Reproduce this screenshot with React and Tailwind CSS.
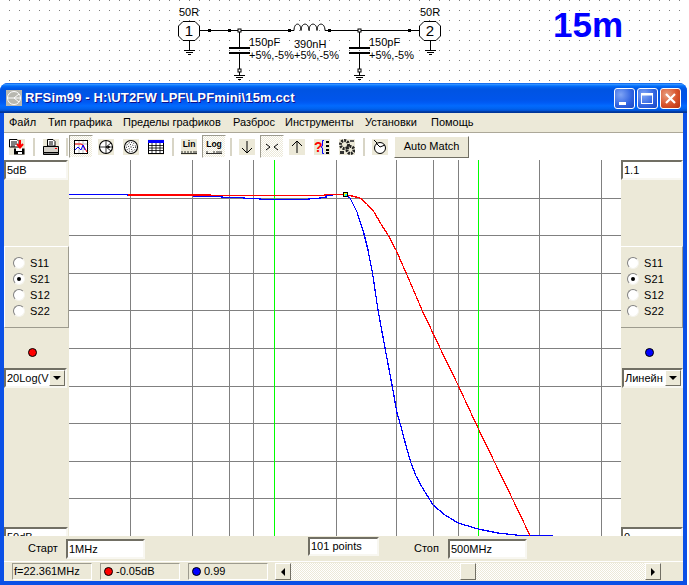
import React from "react";

const FONT = "font-['Liberation_Sans',Arial,sans-serif]";
const SUNK = "border-2 border-t-[#716f64] border-l-[#716f64] border-r-[#f8f7f1] border-b-[#f8f7f1] bg-white";
const THIN = "border border-t-[#9d9b8e] border-l-[#9d9b8e] border-r-white border-b-white";
const RAISED = "border border-t-white border-l-white border-r-[#716f64] border-b-[#716f64] bg-[#ece9d8]";
const CHECK = "bg-[repeating-conic-gradient(#ffffff_0_25%,#ece9d8_0_50%)] bg-[length:2px_2px]";

function Gnd({ x, y }) {
  return (
    <g stroke="#000" strokeWidth="1">
      <path d={`M${x - 5} ${y}H${x + 6}M${x - 3} ${y + 2}H${x + 4}M${x - 1} ${y + 4}H${x + 2}`} />
    </g>
  );
}

function Cap({ x }) {
  return (
    <g>
      <path d={`M${x + 0.5} 30V47M${x + 0.5} 54V70`} stroke="#000" />
      <path d={`M${x - 10} 48H${x + 11}M${x - 10} 53H${x + 11}`} stroke="#000" strokeWidth="2" />
      <rect x={x - 1} y="29" width="3" height="3" fill="#fff" stroke="#000" />
      <rect x={x - 1} y="69" width="3" height="3" fill="#fff" stroke="#000" />
      <path d={`M${x + 0.5} 72V75`} stroke="#000" />
      <Gnd x={x} y={75.5} />
    </g>
  );
}

function Port({ x, label, n }) {
  return (
    <g>
      <path
        d={`M${x - 6} 21.5H${x + 6}L${x + 10.5} 26V36L${x + 6} 40.5H${x - 6}L${x - 10.5} 36V26Z`}
        fill="#fff"
        stroke="#000"
      />
      <text x={x} y="36" fontSize="15" textAnchor="middle" fill="#000">{n}</text>
      <text x={x - 10} y="16" fontSize="11" fill="#000">{label}</text>
      <path d={`M${x + 0.5} 41V50`} stroke="#000" />
      <Gnd x={x} y={50.5} />
    </g>
  );
}

function Schematic() {
  return (
    <svg viewBox="0 0 500 83" className="w-[500px] h-[83px] shrink-0" fontFamily="'Liberation Sans',Arial,sans-serif">
      <path d="M199 30.5H294M325 30.5H420" stroke="#000" />
      {[209, 229, 289, 329, 409].map((x) => (
        <rect key={x} x={x - 1} y="29" width="3" height="3" fill="#000" />
      ))}
      <path
        d="M294 30.5C294 22 301 22 301 30.5C301 22 309 22 309 30.5C309 22 317 22 317 30.5C317 22 325 22 325 30.5"
        fill="none"
        stroke="#000"
      />
      <Cap x={239} />
      <Cap x={359} />
      <Port x={189} label="50R" n="1" />
      <Port x={430} label="50R" n="2" />
      <g fontSize="11" fill="#000">
        <text x="249" y="46">150pF</text>
        <text x="249" y="59">+5%,-5%</text>
        <text x="294" y="48">390nH</text>
        <text x="294" y="59">+5%,-5%</text>
        <text x="369" y="46">150pF</text>
        <text x="369" y="59">+5%,-5%</text>
      </g>
    </svg>
  );
}

const icons = {
  save: (
    <>
      <path d="M0.5 0.5H8L10 2.5V8H0.5Z" fill="#fff" stroke="#000" />
      <path d="M2 3H8M2 5H8M2 7H6" stroke="#000" />
      <path d="M5 9.5H15.5V15.5H5Z" fill="#000" />
      <rect x="7" y="9" width="6" height="3" fill="#fff" />
      <rect x="9" y="13" width="4" height="2" fill="#fff" />
      <path d="M11 1V7M8 5L11 8.5L14 5" fill="none" stroke="#f00" strokeWidth="2" />
    </>
  ),
  print: (
    <>
      <path d="M4.5 0.5H10L12 2.5V7H4.5Z" fill="#fff" stroke="#000" />
      <path d="M6 3H10M6 5H10" stroke="#000" />
      <path d="M0.5 7.5H15.5V13.5H0.5Z" fill="#d4d0c8" stroke="#000" />
      <path d="M0.5 13.5H15.5V15.5H0.5Z" fill="#808080" stroke="#000" />
      <rect x="12" y="9" width="2" height="1" fill="#f00" />
    </>
  ),
  chart: (
    <>
      <rect x="1.5" y="1.5" width="13" height="13" fill="#fff" stroke="#000" />
      <path d="M2 5H14M6 2V14M10 2V14" stroke="#bbb" />
      <path d="M2 5H8L10 6L14 13" fill="none" stroke="#f00" />
      <path d="M2 11L5 8L8 11L10 6L12 11" fill="none" stroke="#00f" />
    </>
  ),
  smith: (
    <>
      <circle cx="8" cy="8" r="6.5" fill="#fff" stroke="#000" strokeWidth="1.1" />
      <path d="M1 8H15M8 1.5V14.5M8 8L13 4M8 8L13 12" stroke="#000" strokeWidth="0.8" />
      <circle cx="10.5" cy="8" r="1.3" fill="#000" />
    </>
  ),
  polar: (
    <>
      <circle cx="8" cy="8" r="6.5" fill="#fff" stroke="#000" strokeWidth="1.1" />
      <circle cx="8" cy="8" r="4.5" fill="none" stroke="#000" strokeDasharray="1 1.6" />
      <circle cx="8" cy="8" r="2.5" fill="none" stroke="#000" strokeDasharray="1 1.6" />
      <rect x="7.5" y="7.5" width="1" height="1" fill="#000" />
    </>
  ),
  table: (
    <>
      <rect x="0.5" y="1.5" width="15" height="13" fill="#fff" stroke="#000" />
      <rect x="0" y="1" width="16" height="3" fill="#00f" />
      <path d="M1 6.5H15M1 9H15M1 11.5H15M4 4V14M8 4V14M12 4V14" stroke="#000" strokeWidth="0.8" />
    </>
  ),
  lin: (
    <>
      <text x="8" y="8" fontSize="8.5" fontWeight="bold" textAnchor="middle" fill="#000">Lin</text>
      <path d="M0 14.5H16M1 12V14M4 12V14M7 12V14M10 12V14M13 12V14M15 12V14" stroke="#000" strokeWidth="0.8" />
    </>
  ),
  log: (
    <>
      <text x="8" y="8" fontSize="8.5" fontWeight="bold" textAnchor="middle" fill="#000">Log</text>
      <path d="M0 14.5H16M1 12V14M8 12V14M11 12V14M13 12V14M15 12V14" stroke="#000" strokeWidth="0.8" />
    </>
  ),
  down: <path d="M8 2V14M3 9L8 14L13 9" fill="none" stroke="#000" />,
  center: <path d="M2 5L6 8L2 11M14 5L10 8L14 11" fill="none" stroke="#000" />,
  up: <path d="M8 14V2M3 7L8 2L13 7" fill="none" stroke="#000" />,
  help: (
    <>
      <text x="0" y="13" fontSize="14" fontWeight="bold" fill="#f00">?</text>
      <path d="M10 1.5H8.5V7L7 8L8.5 9V14.5H10" fill="none" stroke="#00f" />
      <path d="M12 2H15V4H12ZM12 6H15V8H12ZM12 10H15V12H12ZM12 13H15V15H12Z" fill="#000" />
    </>
  ),
  gears: (
    <>
      <circle cx="5.5" cy="5.5" r="4" fill="none" stroke="#222" strokeWidth="3" strokeDasharray="2 1" />
      <circle cx="11.5" cy="11" r="3.5" fill="none" stroke="#222" strokeWidth="3" strokeDasharray="2 1" />
      <rect x="11" y="1" width="4" height="2" fill="#555" />
      <rect x="1" y="12" width="4" height="3" fill="#333" />
    </>
  ),
  mouse: (
    <>
      <circle cx="8" cy="9" r="5.5" fill="#fff" stroke="#000" />
      <path d="M4 4L8 8M8 8L13 6M2 1L5 4" fill="none" stroke="#000" />
    </>
  ),
};

function Btn({ icon, pressed, className = "" }) {
  return (
    <div
      className={`w-6 h-[23px] shrink-0 flex items-center justify-center ${className} ${
        pressed ? `border border-t-[#9d9b8e] border-l-[#9d9b8e] border-r-white border-b-white ${CHECK}` : ""
      }`}
    >
      <svg
        viewBox="0 0 16 16"
        className={`w-4 h-4 ${pressed ? "bg-transparent" : "bg-[#ece9d8]"}`}
        fontFamily="'Liberation Sans',Arial,sans-serif"
      >
        {icons[icon]}
      </svg>
    </div>
  );
}

function Sep({ className }) {
  return <div className={`w-[2px] h-[18px] bg-[#d8d5c6] shrink-0 ${className}`} />;
}

function Radio({ label, checked }) {
  return (
    <div className="flex items-center h-4">
      <div className="w-3 h-3 rounded-full bg-white border border-t-[#808080] border-l-[#808080] border-r-[#f4f3ec] border-b-[#f4f3ec] flex items-center justify-center">
        {checked && <div className="w-1 h-1 rounded-full bg-black" />}
      </div>
      <span className="ml-[5px] text-[11px] leading-4 tracking-[0.2px] text-black">{label}</span>
    </div>
  );
}

function SideGroup({ right }) {
  return (
    <div className={`mt-[66px] h-[82px] shrink-0 border-t border-t-white border-b border-b-[#9d9b8e] border-r border-r-[#9d9b8e] flex flex-col justify-center ${right ? "pl-[6px]" : "pl-[8px] border-l border-l-white"}`}>
      <Radio label="S11" />
      <Radio label="S21" checked />
      <Radio label="S12" />
      <Radio label="S22" />
    </div>
  );
}

function Side({ top, bottom, dot, select, right }) {
  return (
    <div className={`h-[376px] overflow-hidden bg-[#ece9d8] flex flex-col shrink-0 ${right ? "w-[62px]" : "w-[65px]"}`}>
      <div className={`${SUNK} h-[20px] ${right ? "w-[62px]" : "w-[64px]"} shrink-0 pl-px text-[11px] leading-4 text-black`}>{top}</div>
      <SideGroup right={right} />
      <div className={`h-[40px] shrink-0 flex items-end justify-center pb-[11px] ${right ? "pr-[6px]" : "pr-[8px]"}`}>
        <div className={`w-[9px] h-[9px] rounded-full border border-black ${dot}`} />
      </div>
      <div className={`${SUNK} h-[20px] ${right ? "ml-px w-[61px]" : "w-[63px]"} shrink-0 flex items-center overflow-hidden`}>
        <span className="flex-1 pl-px text-[11px] leading-4 text-black overflow-hidden whitespace-nowrap">{select}</span>
        <div className={`${RAISED} w-4 h-4 shrink-0 flex items-center justify-center`}>
          <div className="w-0 h-0 border-l-[4px] border-r-[4px] border-t-[4px] border-l-transparent border-r-transparent border-t-black" />
        </div>
      </div>
      <div className="h-[139px] shrink-0" />
      <div className={`${SUNK} h-[20px] ${right ? "w-[62px]" : "w-[64px]"} shrink-0 pl-px text-[11px] leading-4 text-black`}>{bottom}</div>
    </div>
  );
}

const pts = (a) => a.map((p) => p.join(",")).join(" ");
const redPts = [
  [211, 195.5], [325, 195.5], [325, 194.5], [345, 194.5], [352, 196], [360, 198], [367, 204],
  [374, 212], [381, 224], [388, 235], [396, 250], [407, 275], [422, 310], [440, 348], [458, 385], [478, 428], [495, 463], [513, 500], [530, 535.5],
];
const bluePts = [
  [69, 194.5], [128, 194.5], [128, 195.5], [194, 195.5], [194, 196.5], [222, 196.5], [222, 197.5], [244, 197.5], [244, 198.5], [260, 198.5],
  [260, 199.5], [309, 199.5], [309, 198.5], [320, 198.5], [320, 197.5], [326, 197.5], [326, 195.5], [332, 195.5], [332, 194.5], [345, 194.5],
  [350, 198], [357, 212], [363, 230], [368, 250], [372.5, 273], [378, 310], [385, 348], [392, 385], [397, 413], [400, 423], [405, 442], [411, 463], [416, 476], [422, 487],
  [433, 505], [445, 515], [458, 523], [478, 529], [498, 533], [520, 535.5], [553, 535.5],
];

function Chart() {
  const vs = [130, 192, 229, 253, 336, 396, 433, 458, 539, 601];
  const hs = [198, 235, 273, 310, 348, 386, 423, 461, 498];
  return (
    <svg viewBox="69 160 552 376" className="w-[552px] h-[376px] bg-white shrink-0 block">
      <g stroke="#808080" strokeWidth="1" shapeRendering="crispEdges">
        {vs.map((x) => <path key={x} d={`M${x + 0.5} 160V536`} />)}
        {hs.map((y) => <path key={y} d={`M69 ${y + 0.5}H621`} />)}
      </g>
      <path d="M274.5 160V536M478.5 160V536" stroke="#00ff00" shapeRendering="crispEdges" />
      <polyline points={pts(bluePts)} fill="none" stroke="#0000ff" strokeWidth="1.25" shapeRendering="crispEdges" />
      <path d="M128 194.5H211" stroke="#ff0000" strokeWidth="2" shapeRendering="crispEdges" />
      <polyline points={pts(redPts)} fill="none" stroke="#ff0000" strokeWidth="1.25" shapeRendering="crispEdges" />
      <rect x="343.5" y="192.5" width="4" height="4" fill="#ffff00" stroke="#000" shapeRendering="crispEdges" />
      <rect x="345" y="194" width="2" height="2" fill="#00ffff" />
    </svg>
  );
}

function TitleBtn({ kind }) {
  const close = kind === "close";
  return (
    <div
      className={`w-[21px] h-[21px] shrink-0 rounded-[3px] border border-white flex items-center justify-center ${
        close
          ? "bg-[radial-gradient(circle_at_30%_30%,#e8a080,#d8532c_55%,#b5300f)]"
          : "bg-[radial-gradient(circle_at_30%_30%,#7fa4f5,#2f62e0_60%,#1c47c0)]"
      }`}
    >
      <svg viewBox="0 0 19 19" className="w-[19px] h-[19px]">
        {kind === "min" && <rect x="4" y="13" width="7" height="3" fill="#fff" />}
        {kind === "max" && (
          <g fill="none" stroke="#fff">
            <rect x="3.5" y="4.5" width="11" height="10" />
            <path d="M3.5 5.5H14.5" strokeWidth="2" />
          </g>
        )}
        {close && <path d="M5 5L14 14M14 5L5 14" stroke="#fff" strokeWidth="2.2" />}
      </svg>
    </div>
  );
}

function Arrow({ dir }) {
  return (
    <div className={`${RAISED} w-4 h-[17px] shrink-0 flex items-center justify-center`}>
      <div
        className={
          dir === "left"
            ? "w-0 h-0 border-t-[4px] border-b-[4px] border-r-[4px] border-t-transparent border-b-transparent border-r-black"
            : "w-0 h-0 border-t-[4px] border-b-[4px] border-l-[4px] border-t-transparent border-b-transparent border-l-black"
        }
      />
    </div>
  );
}

export default function App() {
  return (
    <div className={`w-[689px] h-[585px] overflow-hidden flex flex-col bg-white ${FONT}`}>
      <div className="h-[83px] shrink-0 flex bg-[repeating-linear-gradient(90deg,#ffffff_0_9px,transparent_9px_10px),repeating-linear-gradient(180deg,#808080_0_1px,#ffffff_1px_10px)]">
        <Schematic />
        <span className="ml-[53px] mt-[6px] text-[35px] leading-[37px] font-bold text-[#0000ff]">15m</span>
      </div>

      <div className="w-[687px] h-[502px] shrink-0 flex flex-col rounded-t-[8px] overflow-hidden bg-[#0a50e6]">
        <div className="h-[30px] shrink-0 flex items-center pl-[6px] pr-[6px] bg-[linear-gradient(to_bottom,#0058e6_0%,#3a93ff_4%,#288eff_6%,#127dff_8%,#036ffc_10%,#0262ee_14%,#0057e5_20%,#0054e3_24%,#0055eb_56%,#005bf5_66%,#026afe_76%,#0062ef_86%,#0052d6_92%,#0040ab_94%,#003092_100%)]">
          <svg viewBox="0 0 16 16" className="w-4 h-4 shrink-0 bg-[#b8b8b0]">
            <circle cx="8" cy="8" r="6.5" fill="none" stroke="#fff" />
            <path d="M1 8H15M8 8L13 4M8 8L13 12" stroke="#fff" />
          </svg>
          <span className="ml-[3px] text-[13px] tracking-[0.14px] font-bold text-white whitespace-nowrap [text-shadow:1px_1px_0_#0f1089]">
            RFSim99 - H:\UT2FW LPF\LPFmini\15m.cct
          </span>
          <div className="ml-auto flex gap-[2px]">
            <TitleBtn kind="min" />
            <TitleBtn kind="max" />
            <TitleBtn kind="close" />
          </div>
        </div>

        <div className="flex-1 mx-[4px] mb-[4px] flex flex-col min-h-0">
          <div className="h-[20px] shrink-0 bg-[#ece9d8] border-b border-b-[#aca899] flex items-center pl-[5px] text-[11px] text-black whitespace-nowrap">
            <span className="w-[39px]">Файл</span>
            <span className="w-[75px]">Тип графика</span>
            <span className="w-[110px]">Пределы графиков</span>
            <span className="w-[52px]">Разброс</span>
            <span className="w-[80px]">Инструменты</span>
            <span className="w-[66px]">Установки</span>
            <span>Помощь</span>
          </div>

          <div className="h-[27px] shrink-0 bg-white flex items-center pl-px">
            <Btn icon="save" />
            <Sep className="ml-[4px] mr-[4px]" />
            <Btn icon="print" />
            <Sep className="ml-[3px] mr-px" />
            <Btn icon="chart" pressed />
            <Btn icon="smith" className="ml-px" />
            <Btn icon="polar" className="ml-px" />
            <Btn icon="table" className="ml-px" />
            <Sep className="ml-[4px] mr-[3px]" />
            <Btn icon="lin" />
            <Btn icon="log" pressed className="ml-px" />
            <Sep className="ml-[4px] mr-[3px]" />
            <Btn icon="down" />
            <Btn icon="center" pressed className="ml-px" />
            <Btn icon="up" className="ml-px" />
            <Btn icon="help" className="ml-px" />
            <Btn icon="gears" className="ml-px" />
            <Sep className="ml-[4px] mr-[3px]" />
            <Btn icon="mouse" />
            <div className={`${RAISED} ml-[2px] w-[75px] h-[22px] flex items-center justify-center text-[11px] text-black whitespace-nowrap`}>
              Auto Match
            </div>
          </div>

          <div className="h-[376px] shrink-0 flex">
            <Side top="5dB" bottom="50dB" dot="bg-[#ff0000]" select="20Log(V" />
            <Chart />
            <Side top="1.1" bottom="0" dot="bg-[#0000ff]" select="Линейн" right />
          </div>

          <div className="h-[25px] shrink-0 bg-[#ece9d8] flex text-[11px] text-black whitespace-nowrap">
            <span className="ml-[24px] w-[38px] leading-[25px]">Старт</span>
            <div className={`${SUNK} mt-[3px] w-[79px] h-[20px] pl-px leading-4`}>1MHz</div>
            <div className={`${SUNK} ml-[163px] mt-px w-[71px] h-[19px] pl-px leading-[15px]`}>101 points</div>
            <span className="ml-[35px] w-[34px] leading-[25px]">Стоп</span>
            <div className={`${SUNK} mt-[3px] w-[79px] h-[20px] pl-px leading-4`}>500MHz</div>
          </div>

          <div className="h-[20px] shrink-0 bg-[#ece9d8] flex items-center pl-[8px] text-[11px] text-black whitespace-nowrap border-t border-t-white">
            <div className={`${THIN} w-[80px] h-[17px] flex items-center pl-px`}>f=22.361MHz</div>
            <div className={`${THIN} ml-[8px] w-[80px] h-[17px] flex items-center pl-[3px]`}>
              <div className="w-[9px] h-[9px] rounded-full border border-black bg-[#ff0000]" />
              <span className="ml-[3px]">-0.05dB</span>
            </div>
            <div className={`${THIN} ml-[8px] w-[80px] h-[17px] flex items-center pl-[3px]`}>
              <div className="w-[9px] h-[9px] rounded-full border border-black bg-[#0000ff]" />
              <span className="ml-[3px]">0.99</span>
            </div>
            <div className="ml-[7px] w-[386px] h-[17px] flex items-center">
              <Arrow dir="left" />
              <div className={`flex-1 h-[17px] flex ${CHECK}`}>
                <div className={`${RAISED} ml-[169px] w-4 h-[17px]`} />
              </div>
              <Arrow dir="right" />
            </div>
          </div>
        </div>
      </div>
    </div>
  );
}
